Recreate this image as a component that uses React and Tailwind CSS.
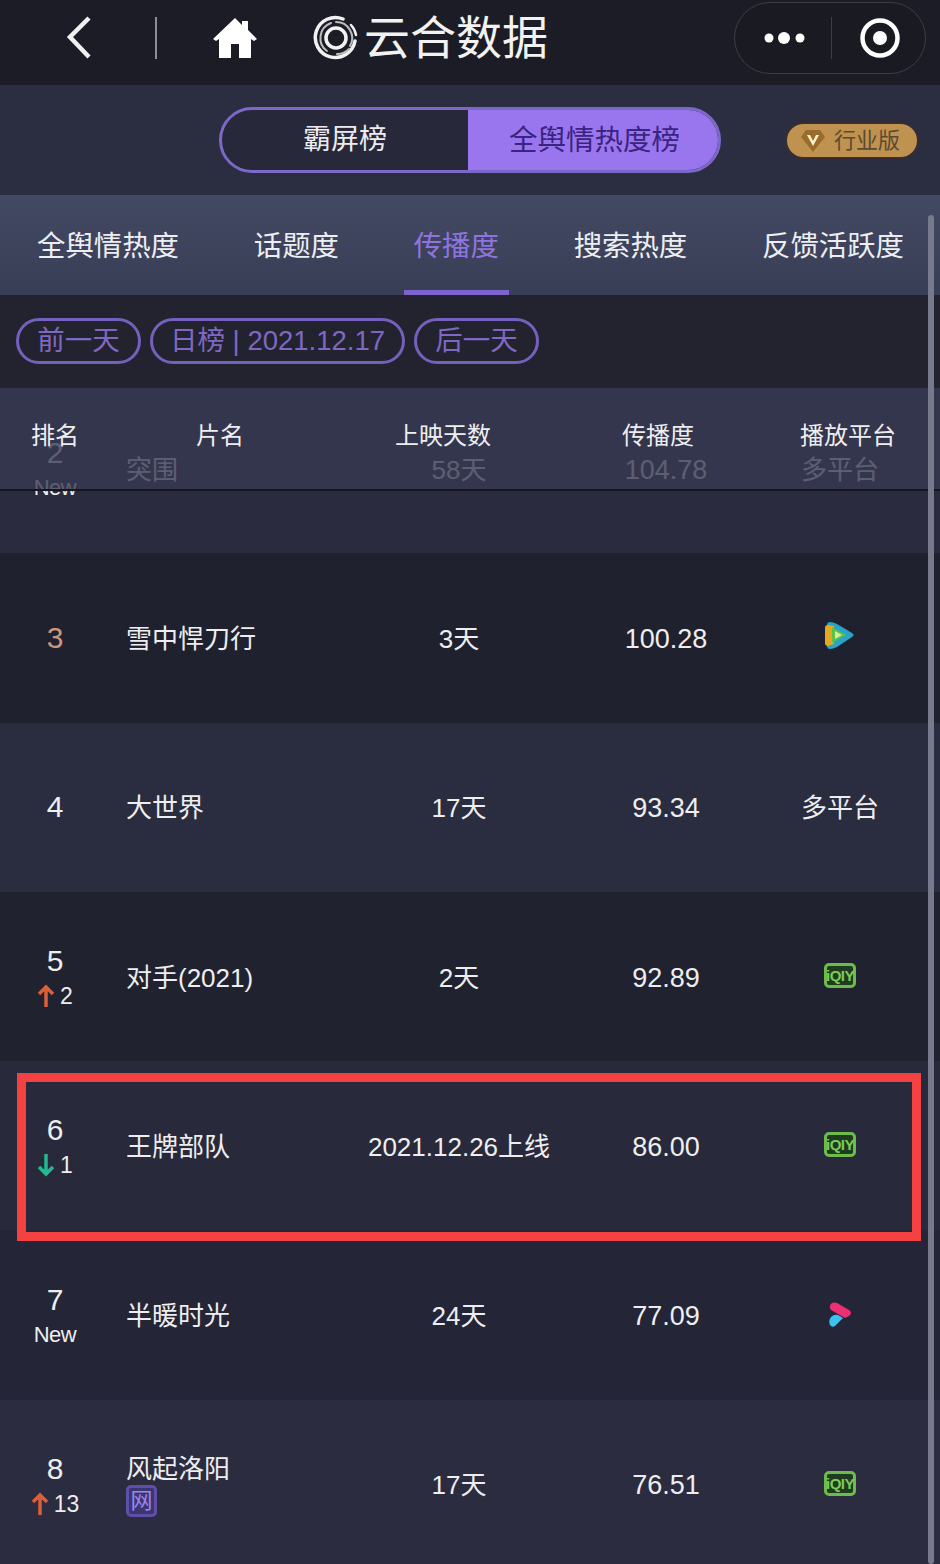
const tabs = ["全舆情热度", "话题度", "传播度", "搜索热度", "反馈活跃度"];

const rows = [
  { rank: "2", sub: "New", title: "突围", days: "58天", score: "104.78", platform: "多平台", bg: "bg-[#2a2b3e]" },
  { rank: "3", title: "雪中悍刀行", days: "3天", score: "100.28", platform: "tencent", bg: "bg-[#20212e]", rankColor: "text-[#c9987c]" },
  { rank: "4", title: "大世界", days: "17天", score: "93.34", platform: "多平台", bg: "bg-[#2a2c3f]" },
  { rank: "5", up: "2", title: "对手(2021)", days: "2天", score: "92.89", platform: "iqiyi", bg: "bg-[#20222f]" },
  { rank: "6", down: "1", title: "王牌部队", days: "2021.12.26上线", score: "86.00", platform: "iqiyi", bg: "bg-[#282a3b]" },
  { rank: "7", sub: "New", title: "半暖时光", days: "24天", score: "77.09", platform: "mango", bg: "bg-[#242536]" },
  { rank: "8", up: "13", title: "风起洛阳", net: true, days: "17天", score: "76.51", platform: "iqiyi", bg: "bg-[#2b2c40]" },
];

function ArrowUp() {
  return (
    <svg width="18" height="24" viewBox="0 0 18 24" fill="none" stroke="#d9603a" strokeWidth="3.5">
      <path d="M9 23V3M2 10l7-7 7 7" />
    </svg>
  );
}

function ArrowDown() {
  return (
    <svg width="18" height="24" viewBox="0 0 18 24" fill="none" stroke="#22b892" strokeWidth="3.5">
      <path d="M9 1v20M2 14l7 7 7-7" />
    </svg>
  );
}

function Logo() {
  return (
    <svg width="46" height="46" viewBox="0 0 46 46" fill="none" stroke="#f2f2f2" strokeLinecap="round">
      <path d="M30 4a20 20 0 1 0 12 22" strokeWidth="3.5" />
      <path d="M38 10a20 20 0 0 1 5 10" strokeWidth="2.5" />
      <path d="M14 36a16 16 0 0 1 4-28" strokeWidth="2" stroke="#bdbdbd" />
      <path d="M23 7a16 16 0 0 1 14 24" strokeWidth="2" stroke="#bdbdbd" />
      <path d="M36 34a16 16 0 0 1-12 5" strokeWidth="2" stroke="#bdbdbd" />
      <circle cx="23" cy="23" r="10" strokeWidth="3.5" />
    </svg>
  );
}

function PlatformIcon({ type }) {
  if (type === "tencent") {
    return (
      <svg className="-mt-[8px]" width="32" height="30" viewBox="0 0 32 30">
        <path d="M3 5q0-3 3-3 3 0 7 2l15 9q3 2 0 4l-15 10q-4 2-7 2-3 0-3-3z" fill="#2aa3c4" />
        <path d="M1 8q0-3 3-3l6 1v18l-6 2q-3 0-3-3z" fill="#e5a91f" />
        <path d="M8 7l14 8-14 8z" fill="#5cc24a" />
        <path d="M11 11l7 4-7 4z" fill="#d5ee9a" />
      </svg>
    );
  }
  if (type === "iqiyi") {
    return (
      <div className="-mt-[4px] flex h-[25px] w-[32px] items-center justify-center rounded-[5px] border-[3px] border-[#6dbb4c] bg-[#1f3b20] text-[15px] leading-none font-bold tracking-[-0.5px] text-[#7ccc58]">
        iQIY
      </div>
    );
  }
  if (type === "mango") {
    return (
      <svg className="-mt-[2px]" width="28" height="30" viewBox="0 0 28 30">
        <path d="M6 3q2-1 5 0l12 7q4 3 0 6l-4 2L5 10Q2 6 6 3z" fill="#ee2f72" />
        <path d="M5 17q3-3 7-2l5 3-8 8q-3 2-5-1-2-4 1-8z" fill="#3cc0f0" />
      </svg>
    );
  }
  return <span>{type}</span>;
}

function Row({ row }) {
  return (
    <div className={`grid h-[169.3px] grid-cols-[110px_226px_246px_168px_1fr] items-center text-[26px] leading-[32px] text-[#eeeef0] ${row.bg}`}>
      <div className="flex flex-col items-center">
        <span className={`text-[30px] leading-[36px] ${row.rankColor || ""}`}>{row.rank}</span>
        {row.sub && <span className="mt-[3px] text-[22px] leading-[28px] tracking-[-0.5px]">{row.sub}</span>}
        {row.up && (
          <span className="mt-[3px] flex h-[28px] items-center gap-[5px] text-[23px]">
            <ArrowUp />
            {row.up}
          </span>
        )}
        {row.down && (
          <span className="mt-[3px] flex h-[28px] items-center gap-[5px] text-[23px]">
            <ArrowDown />
            {row.down}
          </span>
        )}
      </div>
      <div className="flex flex-col items-start pt-[2px] pl-[16px]">
        <span>{row.title}</span>
        {row.net && (
          <span className="flex h-[32px] w-[31px] items-center justify-center rounded-[5px] border-[3px] border-[#5f4fa8] bg-[#3b3570] text-[22px] text-[#9c86ee]">
            网
          </span>
        )}
      </div>
      <div className="pt-[2px] text-center">{row.days}</div>
      <div className="pt-[2px] text-center text-[27px]">{row.score}</div>
      <div className="flex justify-center pt-[2px] pr-[10px]">
        <PlatformIcon type={row.platform} />
      </div>
    </div>
  );
}

export default function App() {
  return (
    <div className="relative h-[1564px] w-[940px] overflow-hidden bg-[#22232f] font-['Liberation_Sans','Noto_Sans_CJK_SC',sans-serif]">
      {/* top nav */}
      <div className="flex h-[85px] items-center bg-[#1c1c26] pb-[9px] text-white">
        <svg className="ml-[64px]" width="30" height="46" viewBox="0 0 30 46" fill="none" stroke="#f0f0f0" strokeWidth="4.5">
          <path d="M25 3L6 22l19 20" />
        </svg>
        <div className="ml-[61px] h-[42px] w-[2px] bg-[#8d8d92]" />
        <svg className="ml-[56px]" width="44" height="42" viewBox="0 0 44 42" fill="#fff">
          <path d="M22 1L0 22l3 2 3-2v19h12V27h8v14h12V22l3 2 3-2-9-9V4h-6v4z" />
        </svg>
        <div className="ml-[56px]">
          <Logo />
        </div>
        <span className="ml-[5px] text-[46px] leading-none text-[#f2f2f2]">云合数据</span>
        <div className="mr-[14px] ml-auto flex h-[72px] w-[192px] items-center rounded-full border border-[#3d3d45] bg-[#1a1a22]">
          <svg className="ml-[28px]" width="44" height="16" viewBox="0 0 44 16" fill="#fff">
            <circle cx="6" cy="8" r="4.5" />
            <circle cx="21" cy="8" r="6" />
            <circle cx="37" cy="8" r="4.5" />
          </svg>
          <div className="ml-[24px] h-[42px] w-px bg-[#3d3d45]" />
          <svg className="ml-[27px]" width="42" height="42" viewBox="0 0 42 42">
            <circle cx="21" cy="21" r="17.5" fill="none" stroke="#fff" strokeWidth="4.5" />
            <circle cx="21" cy="21" r="7" fill="#fff" />
          </svg>
        </div>
      </div>

      {/* board switch */}
      <div className="relative flex h-[110px] items-center justify-center bg-[#2b2d41]">
        <div className="flex h-[66px] w-[502px] overflow-hidden rounded-full border-[3px] border-[#7c68c8] bg-[#272839] text-[28px]">
          <div className="flex w-[246px] items-center justify-center text-[#ececf0]">霸屏榜</div>
          <div className="flex flex-1 items-center justify-center bg-[#9a76ee] pl-[3px] text-[28.5px] text-[#3b2382]">全舆情热度榜</div>
        </div>
        <div className="absolute top-[37px] left-[785px] flex h-[37px] w-[134px] items-center rounded-full border-2 border-[#3a2e33] bg-[#c0924f] pl-[13px] text-[22px] text-[#5c4a33]">
          <svg width="26" height="26" viewBox="0 0 26 26">
            <path d="M6 2h14l5 7-12 15L1 9z" fill="#9a6b2a" />
            <path d="M7 7l6 11 6-11h-3l-3 6-3-6z" fill="#fff2cf" />
          </svg>
          <span className="ml-[8px]">行业版</span>
        </div>
      </div>

      {/* metric tabs */}
      <div className="flex h-[100px] items-start justify-between bg-gradient-to-b from-[#434962] to-[#393e57] pr-[36px] pl-[37px] text-[28.4px] text-[#eceef2]">
        {tabs.map((t) => (
          <div
            key={t}
            className={`relative flex h-full items-center pt-[2px] ${t === "传播度" ? "text-[#8f74e0]" : ""}`}
          >
            {t}
            {t === "传播度" && <div className="absolute -right-[10px] bottom-0 -left-[10px] h-[5px] bg-[#7d63cc]" />}
          </div>
        ))}
      </div>

      {/* date switch */}
      <div className="flex h-[93px] items-center gap-[9px] bg-[#22232f] pb-[2px] pl-[16px] text-[27.5px] text-[#7e68c4]">
        <div className="flex h-[46px] w-[125px] items-center justify-center rounded-full border-[3px] border-[#7560bd]">前一天</div>
        <div className="flex h-[46px] w-[255px] items-center justify-center rounded-full border-[3px] border-[#7560bd]">日榜 | 2021.12.17</div>
        <div className="flex h-[46px] w-[125px] items-center justify-center rounded-full border-[3px] border-[#7560bd]">后一天</div>
      </div>

      {/* table */}
      <div className="relative h-[1176px] overflow-hidden">
        <div className="-mt-[4px]">
          {rows.map((row) => (
            <Row key={row.rank} row={row} />
          ))}
        </div>
        <div className="absolute top-0 right-0 left-0 grid h-[103px] grid-cols-[110px_226px_246px_168px_1fr] border-b-2 border-[#14151f] bg-[#373952]/80 pt-[31px] text-[24px] leading-[34px] text-[#eeeef0]">
          <div className="text-center">排名</div>
          <div className="pl-[86px]">片名</div>
          <div className="pr-[32px] text-center">上映天数</div>
          <div className="pr-[16px] text-center">传播度</div>
          <div className="pl-[50px]">播放平台</div>
        </div>
      </div>

      {/* scrollbar */}
      <div className="absolute top-[215px] right-[6px] h-[1349px] w-[6px] rounded-full bg-[#77798c]" />

      {/* red highlight */}
      <div className="absolute top-[1073px] left-[17px] h-[168px] w-[904px] border-[9px] border-[#f44242]" />
    </div>
  );
}
